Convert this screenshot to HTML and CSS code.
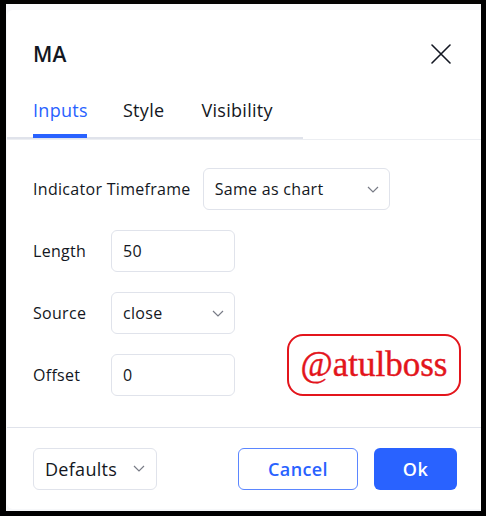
FILE: index.html
```html
<!DOCTYPE html>
<html>
<head>
<meta charset="utf-8">
<link rel="stylesheet" href="styles.css">
</head>
<body>
<div class="frame">
  <div class="backdrop">
    <div class="dialog">
      <div class="header">
        <div class="title">MA</div>
        <button class="close" aria-label="Close">
          <svg width="20" height="20" viewBox="0 0 20 20"><path d="M1 1 L19 19 M19 1 L1 19" stroke="#131722" stroke-width="1.6" fill="none" stroke-linecap="round"/></svg>
        </button>
      </div>
      <div class="tabs-wrap">
        <div class="tabs">
          <div class="tab active">Inputs</div>
          <div class="tab">Style</div>
          <div class="tab">Visibility</div>
        </div>
      </div>
      <div class="content">
        <div class="row">
          <div class="label label-auto">Indicator Timeframe</div>
          <div class="field select wide">
            <span>Same as chart</span>
            <svg class="chev" width="12" height="7" viewBox="0 0 12 7"><path d="M1 1 L6 6 L11 1" stroke="#787b86" stroke-width="1.2" fill="none"/></svg>
          </div>
        </div>
        <div class="row">
          <div class="label">Length</div>
          <div class="field"><span>50</span></div>
        </div>
        <div class="row">
          <div class="label">Source</div>
          <div class="field select">
            <span>close</span>
            <svg class="chev" width="12" height="7" viewBox="0 0 12 7"><path d="M1 1 L6 6 L11 1" stroke="#787b86" stroke-width="1.2" fill="none"/></svg>
          </div>
        </div>
        <div class="row">
          <div class="label">Offset</div>
          <div class="field"><span>0</span></div>
        </div>
        <div class="watermark">@atulboss</div>
      </div>
      <div class="footer">
        <div class="field select defaults">
          <span>Defaults</span>
          <svg class="chev" width="12" height="7" viewBox="0 0 12 7"><path d="M1 1 L6 6 L11 1" stroke="#787b86" stroke-width="1.2" fill="none"/></svg>
        </div>
        <div class="actions">
          <button class="btn cancel">Cancel</button>
          <button class="btn ok">Ok</button>
        </div>
      </div>
    </div>
  </div>
</div>
</body>
</html>
```

FILE: styles.css
```css
* { box-sizing: border-box; }
html, body { margin: 0; padding: 0; background: #fff; }
body {
  width: 486px;
  height: 519px;
  font-family: "Open Sans", "Noto Sans", sans-serif;
  color: #131722;
}
.frame {
  width: 486px;
  height: 516px;
  border-style: solid;
  border-color: #000;
  border-width: 4px 5px 5px 6px;
}
.backdrop {
  height: 100%;
  background: #f7f8fa;
  padding: 6px 0 2px 1px;
}
.dialog {
  height: 499px;
  background: #fff;
  border-radius: 6px 0 0 6px;
  display: flex;
  flex-direction: column;
  position: relative;
}
.header {
  height: 88px;
  display: flex;
  align-items: center;
  justify-content: space-between;
  padding: 0 30px 0 26px;
}
.title {
  font-size: 21px;
  font-weight: 600;
  letter-spacing: 0.2px;
}
.close {
  border: 0;
  background: none;
  padding: 0;
  width: 20px;
  height: 20px;
  display: flex;
}
.tabs-wrap {
  border-bottom: 1px solid #eceef2;
}
.tabs {
  width: 296px;
  height: 41px;
  display: flex;
  padding-left: 26px;
  border-bottom: 2px solid #e0e3eb;
}
.tab {
  font-size: 18px;
  line-height: 24px;
  letter-spacing: 0.3px;
  position: relative;
  color: #131722;
  margin-right: 35px;
}
.tab:nth-child(2) { margin-right: 37px; }
.tab.active { color: #2962ff; }
.tab.active::after {
  content: "";
  position: absolute;
  left: 0;
  right: 1px;
  top: 36px;
  height: 4px;
  background: #2962ff;
}
.content {
  flex: 1;
  padding: 28px 0 0 26px;
  display: flex;
  flex-direction: column;
  gap: 20px;
  position: relative;
}
.row {
  display: flex;
  align-items: center;
  height: 42px;
}
.label {
  width: 78px;
  font-size: 16px;
  letter-spacing: 0.3px;
}
.label-auto { width: auto; margin-right: 12px; }
.field {
  width: 124px;
  height: 42px;
  border: 1px solid #e0e3eb;
  border-radius: 6px;
  display: flex;
  align-items: center;
  justify-content: space-between;
  padding: 0 10px 0 11px;
  font-size: 16px;
  letter-spacing: 0.3px;
}
.field.wide { width: 187px; }
.chev { flex: none; }
.watermark {
  position: absolute;
  left: 280px;
  top: 194px;
  width: 174px;
  height: 62px;
  border: 2.5px solid #e3151c;
  border-radius: 16px;
  color: #e3151c;
  font-family: "Liberation Serif", serif;
  font-size: 35px;
  -webkit-text-stroke: 0.4px #e3151c;
  display: flex;
  align-items: center;
  justify-content: center;
}
.footer {
  height: 82px;
  border-top: 1px solid #e0e3eb;
  display: flex;
  align-items: center;
  justify-content: space-between;
  padding: 0 24px 0 26px;
}
.defaults { font-size: 18px; padding-right: 11px; }
.actions { display: flex; gap: 16px; }
.btn {
  height: 42px;
  border-radius: 6px;
  font-family: inherit;
  font-size: 18px;
  font-weight: 600;
  letter-spacing: 0.4px;
  cursor: pointer;
}
.cancel {
  width: 120px;
  background: #fff;
  color: #2962ff;
  border: 1px solid #5b86ff;
}
.ok {
  width: 83px;
  background: #2962ff;
  color: #fff;
  border: 0;
}
```
